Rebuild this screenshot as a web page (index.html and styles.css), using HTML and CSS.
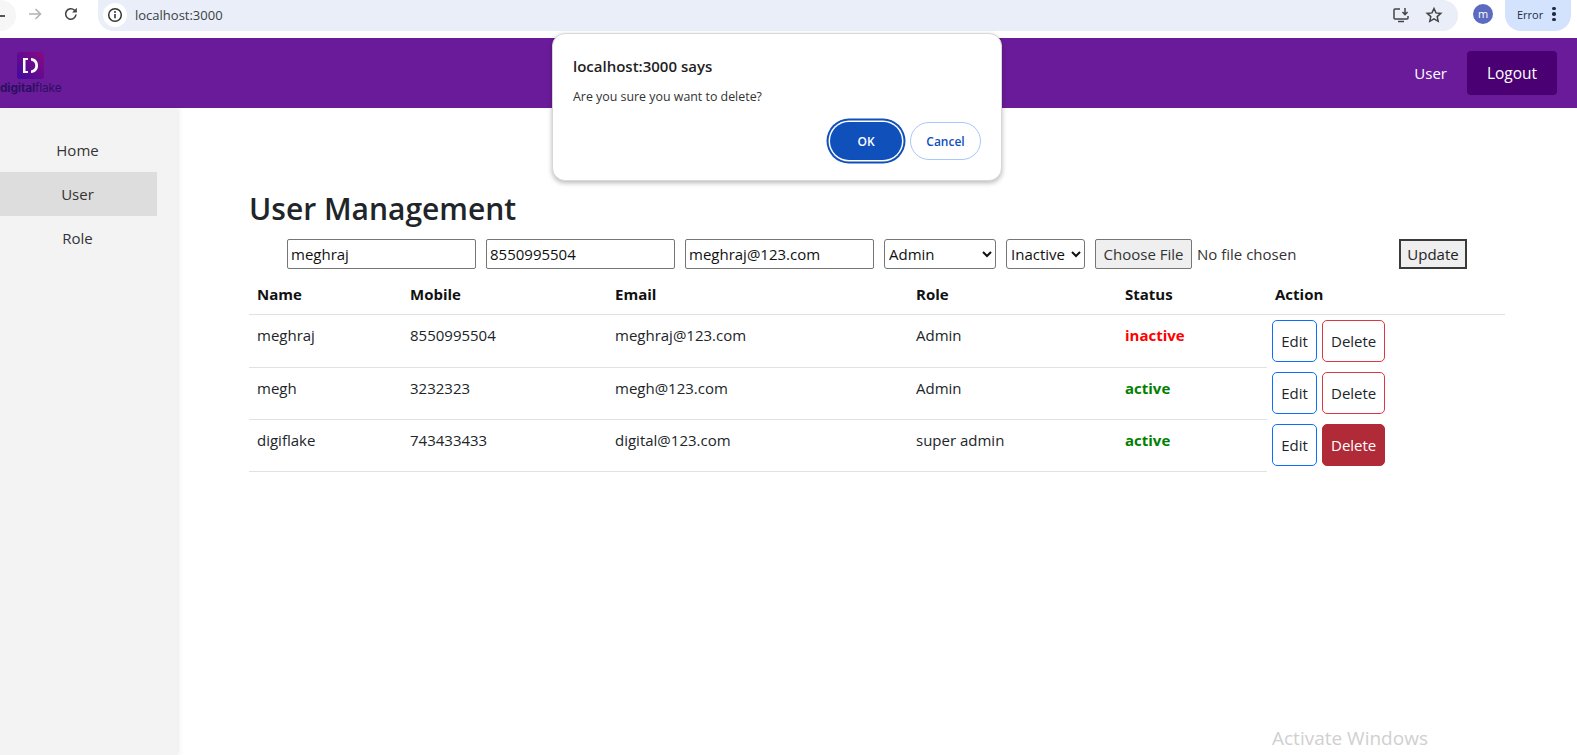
FILE: index.html
```html
<!DOCTYPE html>
<html>
  <head>
    <title>User Management</title>
    <link rel="stylesheet" href="styles.css">
  </head>
  <body>
    <div class="chrome">
      <div class="back-btn"><span class="back-dash"></span></div>
      <svg class="nav-icon forward" width="16" height="16" viewBox="0 0 16 16"><path d="M2 8h11M8.500 3l5 5-5 5" fill="none" stroke="#b4b4b4" stroke-width="1.600"/></svg>
      <svg class="nav-icon reload" width="16" height="16" viewBox="0 0 16 16"><path d="M13 8.500a5.200 5.200 0 1 1-1.500-4.200L13 5.800" fill="none" stroke="#444" stroke-width="1.600"/><path d="M13.800 1.800v4.700H9.100z" fill="#444"/></svg>
      <div class="omnibox">
        <div class="info-wrap">
          <svg width="16" height="16" viewBox="0 0 16 16"><circle cx="8" cy="8" r="6.300" fill="none" stroke="#333" stroke-width="1.500"/><path d="M8 7v4.200" stroke="#333" stroke-width="1.600"/><circle cx="8" cy="5" r="1" fill="#333"/></svg>
        </div>
        <span class="url">localhost:3000</span>
        <div class="omni-icons">
          <svg width="18" height="18" viewBox="0 0 18 18"><path d="M8 3H3a1 1 0 0 0-1 1v8a1 1 0 0 0 1 1h12a1 1 0 0 0 1-1v-2M6 15.500h6" fill="none" stroke="#444" stroke-width="1.500"/><path d="M13 2v6M10.500 6l2.500 2.700L15.500 6" fill="none" stroke="#444" stroke-width="1.500"/></svg>
          <svg width="18" height="18" viewBox="0 0 18 18"><path d="M9 2.500l2 4.400 4.800.5-3.600 3.200 1 4.700L9 12.900l-4.200 2.400 1-4.700-3.600-3.200 4.800-.5z" fill="none" stroke="#444" stroke-width="1.500"/></svg>
        </div>
      </div>
      <div class="avatar">m</div>
      <div class="error-pill">
        <span>Error</span>
        <span class="dots"><i></i><i></i><i></i></span>
      </div>
    </div>

    <header class="topbar">
      <div class="logo">
        <svg class="logo-tile" width="27" height="27" viewBox="0 0 27 27">
          <defs><linearGradient id="tile" x1="0" y1="1" x2="1" y2="0"><stop offset="0" stop-color="#3f0aa0"/><stop offset="1" stop-color="#8a0a80"/></linearGradient></defs>
          <rect width="27" height="27" rx="3" fill="url(#tile)"/>
          <path d="M11 6H6v15h5v-2H8.500V8H11z" fill="#fff"/>
          <path d="M14 6c5 .5 7 3.500 7 7.500s-2 7-7 7.500v-2.500c2.800-.6 4.300-2.400 4.300-5s-1.500-4.400-4.300-5z" fill="#fff"/>
        </svg>
        <div class="logo-text"><b>digital</b>flake</div>
      </div>
      <nav class="top-links">
        <a class="top-link">User</a>
        <a class="logout">Logout</a>
      </nav>
    </header>

    <div class="layout">
      <aside class="sidebar">
        <div class="side-item">Home</div>
        <div class="side-item active">User</div>
        <div class="side-item">Role</div>
      </aside>

      <main class="content">
        <h1>User Management</h1>
        <form class="edit-form">
          <input class="field" type="text" value="meghraj">
          <input class="field" type="text" value="8550995504">
          <input class="field" type="text" value="meghraj@123.com">
          <select class="pick role-pick"><option>Admin</option></select>
          <select class="pick status-pick"><option>Inactive</option></select>
          <input class="file" type="file">
          <button class="update" type="button">Update</button>
        </form>

        <table class="users">
          <thead>
            <tr>
              <th class="c-name">Name</th>
              <th class="c-mobile">Mobile</th>
              <th class="c-email">Email</th>
              <th class="c-role">Role</th>
              <th class="c-status">Status</th>
              <th class="c-action">Action</th>
            </tr>
          </thead>
          <tbody>
            <tr>
              <td>meghraj</td>
              <td>8550995504</td>
              <td>meghraj@123.com</td>
              <td>Admin</td>
              <td class="off">inactive</td>
              <td class="actions"><button class="btn edit">Edit</button><button class="btn del">Delete</button></td>
            </tr>
            <tr>
              <td>megh</td>
              <td>3232323</td>
              <td>megh@123.com</td>
              <td>Admin</td>
              <td class="on">active</td>
              <td class="actions"><button class="btn edit">Edit</button><button class="btn del">Delete</button></td>
            </tr>
            <tr>
              <td>digiflake</td>
              <td>743433433</td>
              <td>digital@123.com</td>
              <td>super admin</td>
              <td class="on">active</td>
              <td class="actions"><button class="btn edit">Edit</button><button class="btn del hover">Delete</button></td>
            </tr>
          </tbody>
        </table>
      </main>
    </div>

    <div class="dialog">
      <div class="dialog-title">localhost:3000 says</div>
      <div class="dialog-msg">Are you sure you want to delete?</div>
      <div class="dialog-btns">
        <button class="ok">OK</button>
        <button class="cancel">Cancel</button>
      </div>
    </div>

    <div class="activate">Activate Windows</div>
  </body>
</html>
```

FILE: styles.css
```css
html, body { height: 100%; }

body {
  margin: 0;
  font-family: "Open Sans", "Noto Sans", sans-serif;
  font-size: 15px;
  color: #212529;
  background: #fff;
  display: flex;
  flex-direction: column;
  overflow: hidden;
}

/* browser bar */
.chrome { height: 38px; flex: none; display: flex; align-items: flex-start; position: relative; background: #fff; }
.back-btn { width: 16px; height: 31px; background: #f6f6f6; border-radius: 0 16px 16px 0; flex: none; display: flex; align-items: center; }
.back-dash { width: 5px; height: 2px; background: #555; }
.nav-icon { flex: none; margin-top: 6px; }
.forward { margin-left: 11px; }
.reload { margin-left: 20px; }
.omnibox { margin-left: 19px; width: 1360px; height: 31px; flex: none; background: #e9eef8; border-radius: 0 16px 16px 16px; display: flex; align-items: center; padding: 0 15px 2px 5px; box-sizing: border-box; }
.info-wrap { width: 24px; height: 24px; border-radius: 50%; background: #fff; display: flex; align-items: center; justify-content: center; }
.url { margin-left: 8px; font-size: 13px; line-height: 18px; color: #3c4043; }
.omni-icons { margin-left: auto; display: flex; gap: 15px; }
.avatar { margin: 4px 0 0 15px; width: 20px; height: 20px; border-radius: 50%; background: #5c6bc0; color: #fff; font-size: 11px; line-height: 19px; text-align: center; flex: none; }
.error-pill { margin-left: 12px; width: 66px; height: 31px; box-sizing: border-box; background: #d3e3fd; border-radius: 0 0 16px 16px; display: flex; align-items: center; padding: 0 0 3px 12px; font-size: 11px; color: #1f2a44; flex: none; }
.dots { margin-left: 9px; display: flex; flex-direction: column; gap: 2px; }
.dots i { width: 3.500px; height: 3.500px; border-radius: 50%; background: #1f2a44; display: block; }

/* purple header */
.topbar { height: 70px; flex: none; background: #6a1b9a; display: flex; align-items: center; justify-content: space-between; }
.logo { width: 64px; position: relative; align-self: flex-start; padding-top: 14px; }
.logo-tile { display: block; margin-left: 17px; }
.logo-text { font-family: "Inter", sans-serif; font-size: 11.800px; line-height: 12px; margin-top: 3px; color: #2a1060; white-space: nowrap; letter-spacing: -0.1px; }
.logo-text b { font-weight: 700; }
.top-links { display: flex; align-items: center; margin-right: 20px; }
.top-link { color: #fff; font-size: 15px; margin-right: 20px; }
.logout { width: 90px; height: 44px; background: #4a0072; border-radius: 4px; color: #fff; font-size: 15.500px; display: flex; align-items: center; justify-content: center; }

/* page */
.layout { flex: 1; display: flex; min-height: 0; }
.sidebar { width: 177px; flex: none; box-sizing: border-box; background: #f3f3f3; box-shadow: 2px 0 5px rgba(0,0,0,0.08); padding: 20px 20px 0 0; }
.side-item { height: 44px; line-height: 44px; text-align: center; font-size: 15px; color: #333; padding-right: 2px; }
.side-item.active { background: #ddd; }

.content { flex: 1; padding: 80px 72px 0 72px; min-width: 0; }
h1 { margin: 0 0 9px; font-size: 30px; line-height: 42px; font-weight: 600; color: #212529; }

.edit-form { display: flex; align-items: center; height: 30px; padding-left: 38px; }
.field { width: 189px; height: 30px; box-sizing: border-box; margin: 0 10px 0 0; padding: 1px 3px; border: 1px solid #767676; border-radius: 2px; font: 15px "Open Sans", sans-serif; color: #111; }
.pick { height: 30px; box-sizing: border-box; margin-right: 10px; border: 1px solid #767676; border-radius: 3px; background: #fff; font: 15px "Open Sans", sans-serif; color: #111; }
.role-pick { width: 112px; }
.status-pick { width: 79px; }
.file { width: 304px; font: 15px "Open Sans", sans-serif; color: #333; }
.file::file-selector-button { height: 30px; width: 97px; padding: 0; font: 15px "Open Sans", sans-serif; color: #333; background: #efefef; border: 1px solid #767676; border-radius: 2px; margin-right: 5px; }
.update { width: 68px; height: 30px; padding: 0; background: #efefef; border: 2px solid #3a3a3a; font: 15px "Open Sans", sans-serif; color: #222; }

.users { width: 100%; border-collapse: collapse; table-layout: fixed; margin-top: 6px; }
.users th { height: 39px; padding: 8px; box-sizing: border-box; text-align: left; font-weight: 700; color: #111; border-bottom: 1px solid #dee2e6; }
.users td { height: 52px; padding: 8px; box-sizing: border-box; vertical-align: top; line-height: 24px; color: #212529; border-bottom: 1px solid #dee2e6; }
.users tbody tr:first-child td { height: 53px; }
.c-name { width: 153px; }
.c-mobile { width: 205px; }
.c-email { width: 301px; }
.c-role { width: 209px; }
.c-status { width: 150px; }

.users td.off { color: #f00; font-weight: 700; }
.users td.on { color: green; font-weight: 700; }
.users td.actions { padding: 5px 0 0 5px; border-bottom: none; }
.actions { white-space: nowrap; }

.btn { height: 42px; box-sizing: border-box; padding: 0 8px; margin-right: 5px; background: #fff; border-radius: 5px; font: 15px "Open Sans", sans-serif; color: #212529; }
.edit { width: 45px; border: 1px solid #0d6efd; }
.del { width: 63px; border: 1px solid #dc3545; }
.del.hover { background: #b02a37; border-color: #b02a37; color: #fff; }

/* alert dialog */
.dialog { position: absolute; left: 552px; top: 33px; width: 450px; height: 148px; box-sizing: border-box; padding: 22px 20px 0; background: #fff; border: 1px solid #d8d8d8; border-radius: 13px; box-shadow: 0 2px 5px rgba(0,0,0,0.28); }
.dialog-title { font-size: 15px; line-height: 20px; font-weight: 600; color: #1f1f1f; }
.dialog-msg { margin-top: 13px; font-size: 12.400px; line-height: 16px; color: #333; }
.dialog-btns { display: flex; justify-content: flex-end; gap: 8px; margin-top: 17px; }
.ok { width: 72px; height: 38px; padding: 0; border: none; border-radius: 19px; background: #0f50bb; color: #fff; font: 600 12px "Open Sans", sans-serif; box-shadow: 0 0 0 1.500px #fff, 0 0 0 3.500px #0f50bb; }
.cancel { width: 71px; height: 38px; padding: 0; background: #fff; border: 1px solid #a8c7fa; border-radius: 19px; color: #0f50bb; font: 600 12px "Open Sans", sans-serif; }

.activate { position: absolute; left: 1272px; top: 726px; font-size: 19px; line-height: 24px; color: #d0d0d0; }
```
